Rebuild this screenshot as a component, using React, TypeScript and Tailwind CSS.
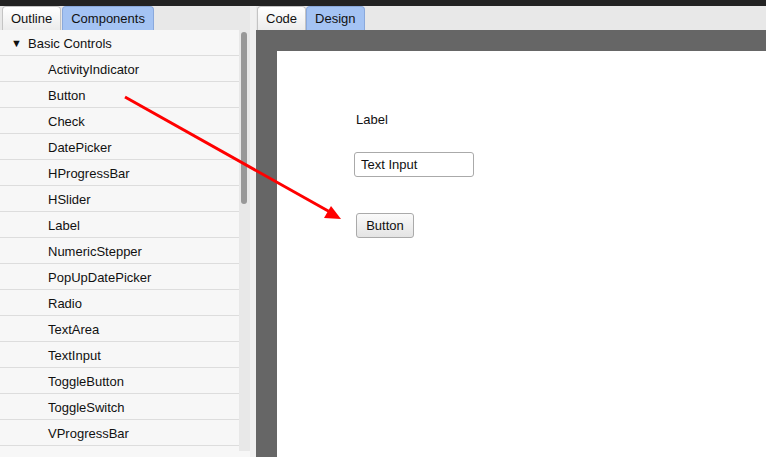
import React from 'react';

const items = [
  'ActivityIndicator',
  'Button',
  'Check',
  'DatePicker',
  'HProgressBar',
  'HSlider',
  'Label',
  'NumericStepper',
  'PopUpDatePicker',
  'Radio',
  'TextArea',
  'TextInput',
  'ToggleButton',
  'ToggleSwitch',
  'VProgressBar',
];

const Tab = ({ label, active }: { label: string; active?: boolean }) => (
  <div
    className={`h-[24px] px-[8px] pt-px flex items-center border border-b-0 rounded-t-[4px] text-[13px] text-[#111] ${
      active
        ? 'bg-[#a4c3f3] border-[#8aa9dc]'
        : 'bg-gradient-to-b from-white to-[#ececec] border-[#c4c4c4]'
    }`}
  >
    {label}
  </div>
);

export default function App() {
  return (
    <div className="relative w-[766px] h-[457px] overflow-hidden flex flex-col bg-[#e8e8e8] font-['Liberation_Sans',Arial,sans-serif]">
      <div className="h-[6px] bg-[#222222] shrink-0" />
      <div className="flex flex-1 min-h-0">
        {/* left panel */}
        <div className="w-[250px] flex flex-col">
          <div className="h-[24px] flex items-end pl-[2px] gap-px shrink-0">
            <Tab label="Outline" />
            <Tab label="Components" active />
          </div>
          <div className="flex flex-1 min-h-0 bg-[#f7f7f7]">
            <div className="w-[239px] overflow-hidden">
              <div className="h-[26px] pt-[2px] flex items-center border-b border-[#dddddd] text-[13px] text-[#111]">
                <span className="ml-[11px] text-[11px] w-[17px]">▼</span>
                <span>Basic Controls</span>
              </div>
              {items.map(item => (
                <div
                  key={item}
                  className="h-[26px] pt-[2px] flex items-center pl-[48px] border-b border-[#dddddd] text-[13px] text-[#111]"
                >
                  {item}
                </div>
              ))}
            </div>
            <div className="w-[11px] h-[421px] bg-[#e8e8e8] pt-[2px] pl-[2px]">
              <div className="w-[6px] h-[172px] rounded-[3px] bg-[#989898]" />
            </div>
          </div>
        </div>
        <div className="w-[6px] bg-[#f0f0f0]" />
        {/* right panel */}
        <div className="flex-1 flex flex-col">
          <div className="h-[24px] flex items-end pl-px gap-0 shrink-0">
            <Tab label="Code" />
            <Tab label="Design" active />
          </div>
          <div className="flex-1 bg-[#666666] pt-[21px] pl-[21px]">
            <div className="h-full bg-white relative text-[13px] text-[#111]">
              <div className="absolute left-[79px] top-[59px]">Label</div>
              <div className="absolute left-[77px] top-[101px] w-[120px] h-[25px] border border-[#aaaaaa] rounded-[3px] bg-white flex items-center pl-[6px]">
                Text Input
              </div>
              <div className="absolute left-[79px] top-[162px] w-[58px] h-[25px] border border-[#aaaaaa] rounded-[3px] bg-gradient-to-b from-[#fafafa] to-[#e4e4e4] flex items-center justify-center">
                Button
              </div>
            </div>
          </div>
        </div>
      </div>
      {/* arrow overlay */}
      <svg className="absolute left-0 top-0 pointer-events-none" width="766" height="457">
        <line x1="125" y1="97" x2="330" y2="212" stroke="#ff0000" strokeWidth="3" />
        <polygon points="341,219 324,218 331,206" fill="#ff0000" />
      </svg>
    </div>
  );
}
